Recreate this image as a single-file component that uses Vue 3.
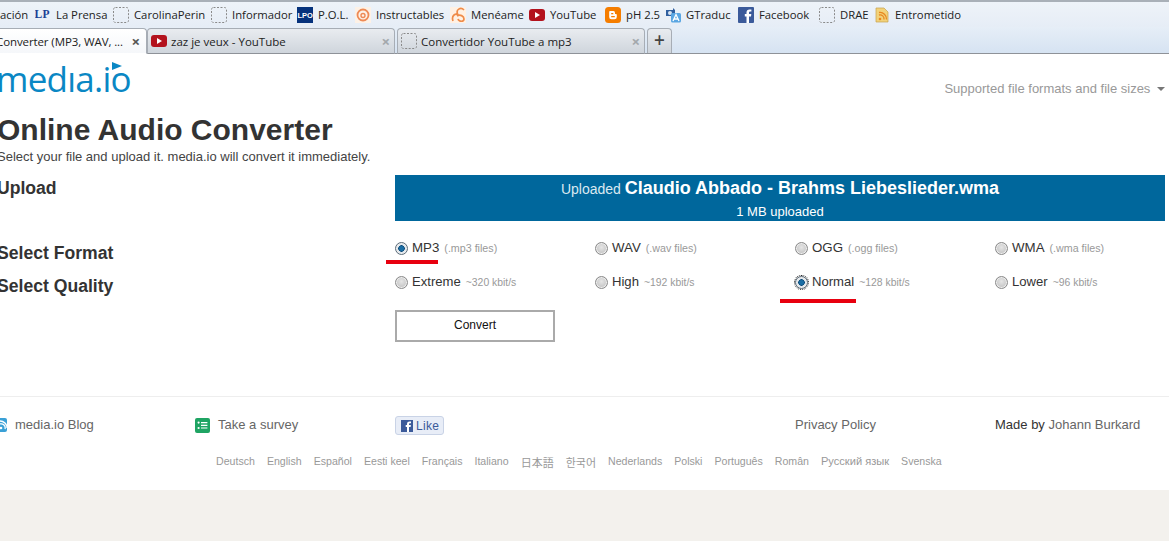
<script setup>
const marks = [
  { t: 'ación', i: null, w: 35 },
  { t: 'La Prensa', i: 'lp', w: 78 },
  { t: 'CarolinaPerin', i: 'blank', w: 98 },
  { t: 'Informador', i: 'blank', w: 86 },
  { t: 'P.O.L.', i: 'lpo', w: 58 },
  { t: 'Instructables', i: 'ins', w: 95 },
  { t: 'Menéame', i: 'men', w: 79 },
  { t: 'YouTube', i: 'yt', w: 76 },
  { t: 'pH 2.5', i: 'blog', w: 60 },
  { t: 'GTraduc', i: 'gt', w: 73 },
  { t: 'Facebook', i: 'fb', w: 81 },
  { t: 'DRAE', i: 'blank', w: 55 },
  { t: 'Entrometido', i: 'rss', w: 90 }
]
const tabs = [
  { t: 'Converter (MP3, WAV, ...', cls: 'tab active', icon: null },
  { t: 'zaz je veux - YouTube', cls: 'tab', icon: 'yt' },
  { t: 'Convertidor YouTube a mp3', cls: 'tab', icon: 'blank' }
]
const formats = [
  { n: 'MP3', d: '(.mp3 files)', on: true },
  { n: 'WAV', d: '(.wav files)' },
  { n: 'OGG', d: '(.ogg files)' },
  { n: 'WMA', d: '(.wma files)' }
]
const quality = [
  { n: 'Extreme', d: '~320 kbit/s' },
  { n: 'High', d: '~192 kbit/s' },
  { n: 'Normal', d: '~128 kbit/s', on: true, focus: true },
  { n: 'Lower', d: '~96 kbit/s' }
]
const langs = [
  { t: 'Deutsch' }, { t: 'English' }, { t: 'Español' }, { t: 'Eesti keel' }, { t: 'Français' }, { t: 'Italiano' },
  { t: '日本語', c: 'cjk' }, { t: '한국어', c: 'cjk' },
  { t: 'Nederlands' }, { t: 'Polski' }, { t: 'Português' }, { t: 'Român' }, { t: 'Русский язык', c: 'ru' }, { t: 'Svenska' }
]
</script>

<template>
  <div class="page">
    <div class="bookmarks">
      <div v-for="m in marks" :key="m.t" class="mark" :style="{ width: m.w + 'px' }">
        <svg v-if="m.i" class="fav" viewBox="0 0 16 16">
          <template v-if="m.i === 'blank'"><rect x=".5" y=".5" width="15" height="15" rx="2" fill="none" stroke="#8a8a8a" stroke-dasharray="2 1.5"/></template>
          <template v-else-if="m.i === 'lp'"><text x="-.5" y="10.5" font-size="11.5" font-weight="700" font-family="Liberation Serif" letter-spacing=".4" fill="#1c3f94">LP</text></template>
          <template v-else-if="m.i === 'lpo'"><rect width="16" height="16" fill="#06327c"/><text x=".5" y="11" font-size="7.5" font-weight="700" font-family="Liberation Sans" fill="#fff">LPO</text></template>
          <template v-else-if="m.i === 'ins'"><rect width="16" height="16" fill="#fdf1e6"/><circle cx="8" cy="8" r="5.5" fill="none" stroke="#ee8a55" stroke-width="1.8"/><circle cx="8" cy="8.5" r="2" fill="none" stroke="#ee8a55" stroke-width="1.4"/></template>
          <template v-else-if="m.i === 'men'"><rect width="16" height="16" fill="#fff1e4"/><path d="M3 14 C1 8 6 6 8 8 C5 2 11 0 14 3 M7 9 C10 7 14 9 14 12 C14 15 9 15 8 12" fill="none" stroke="#ef8c4a" stroke-width="1.7"/></template>
          <template v-else-if="m.i === 'yt'"><rect y="2" width="16" height="12" rx="3" fill="#b3121d"/><path d="M6 5 L11 8 L6 11 Z" fill="#fff"/></template>
          <template v-else-if="m.i === 'blog'"><rect width="16" height="16" rx="3.5" fill="#f57d00"/><path d="M5 4 H8.5 Q10 4 10 6 V7 H11 Q11.8 7 11.8 8 V10 Q11.8 12.3 9.5 12.3 H6.5 Q4.2 12.3 4.2 10 V5 Q4.2 4 5 4 Z" fill="#fff"/><path d="M6.2 6.6 H8.3 M6.2 9.7 H9.8" stroke="#f57d00" stroke-width="1.3"/></template>
          <template v-else-if="m.i === 'gt'"><path d="M1 3 H8 V1 L10 3 V9 H1 Z" fill="#2f5f9f"/><circle cx="5" cy="6" r="2" fill="#d7e4f2"/><rect x="6" y="6" width="10" height="9.5" rx="1.5" fill="#5aa6e2"/><path d="M8 14 L11 7.5 L14 14 M9.2 12 H12.8" fill="none" stroke="#fff" stroke-width="1.3"/></template>
          <template v-else-if="m.i === 'fb'"><rect width="16" height="16" rx="1" fill="#3b5a9a"/><path d="M11 16 V9.5 H13 L13.3 7 H11 V5.6 Q11 4.6 12.2 4.6 H13.4 V2.4 H11.6 Q8.5 2.4 8.5 5.4 V7 H6.8 V9.5 H8.5 V16 Z" fill="#fff"/></template>
          <template v-else-if="m.i === 'rss'"><path d="M2 1 H10 L14 5 V15 H2 Z" fill="#f2d27a" stroke="#c7a24a" stroke-width=".7"/><circle cx="6" cy="12" r="1.3" fill="#e8871e"/><path d="M5 8 A4 4 0 0 1 10 12.5 M5 5.5 A6.5 6.5 0 0 1 12.5 12.5" fill="none" stroke="#e8871e" stroke-width="1.3"/></template>
        </svg>
        <span>{{ m.t }}</span>
      </div>
    </div>

    <div class="tabstrip">
      <div v-for="t in tabs" :key="t.t" :class="t.cls">
        <svg v-if="t.icon === 'yt'" class="fav" viewBox="0 0 16 16"><rect y="2" width="16" height="12" rx="3" fill="#b3121d"/><path d="M6 5 L11 8 L6 11 Z" fill="#fff"/></svg>
        <svg v-if="t.icon === 'blank'" class="fav" viewBox="0 0 16 16"><rect x=".5" y=".5" width="15" height="15" rx="2" fill="none" stroke="#8a8a8a" stroke-dasharray="2 1.5"/></svg>
        <span class="tabtitle">{{ t.t }}</span>
        <span class="close">×</span>
      </div>
      <div class="newtab">+</div>
    </div>

    <div class="content">
      <header class="top">
        <div class="logo">medıa.io<i class="tri"></i></div>
        <div class="formats">Supported file formats and file sizes <i class="caret"></i></div>
      </header>

      <h1>Online Audio Converter</h1>
      <p class="sub">Select your file and upload it. media.io will convert it immediately.</p>

      <div class="row upload">
        <h2>Upload</h2>
        <div class="band">
          <div class="band1">Uploaded <b>Claudio Abbado - Brahms Liebeslieder.wma</b></div>
          <div class="band2">1 MB uploaded</div>
        </div>
      </div>

      <div class="row format">
        <h2>Select Format</h2>
        <div class="opts">
          <div v-for="o in formats" :key="o.n" class="opt">
            <i class="radio" :class="{ on: o.on }"></i><span class="name">{{ o.n }}</span><span class="desc">{{ o.d }}</span>
          </div>
        </div>
      </div>

      <div class="row quality">
        <h2>Select Quality</h2>
        <div class="opts">
          <div v-for="o in quality" :key="o.n" class="opt">
            <i class="radio" :class="{ on: o.on, focus: o.focus }"></i><span class="name">{{ o.n }}</span><span class="desc">{{ o.d }}</span>
          </div>
        </div>
      </div>

      <div class="row action">
        <span></span>
        <div><button class="convert">Convert</button></div>
      </div>

      <footer class="foot">
        <div class="links">
          <div class="l l1">
            <svg class="ficon" viewBox="0 0 14 14"><rect width="14" height="14" rx="2" fill="#3aa0d6"/><circle cx="8" cy="10" r="1.3" fill="#fff"/><path d="M7 6 A4 4 0 0 1 12 11 M7 3 A7 7 0 0 1 14 10" fill="none" stroke="#fff" stroke-width="1.3"/></svg>
            <span>media.io Blog</span>
          </div>
          <div class="l l2">
            <svg class="ficon sv" viewBox="0 0 15 15"><rect width="15" height="15" rx="2" fill="#1fa463"/><circle cx="3.6" cy="4.6" r="1.1" fill="#fff"/><circle cx="3.6" cy="10" r="1.1" fill="#fff"/><path d="M6 4.6 H12.4 M6 7.4 H12.4 M6 10 H12.4" stroke="#fff" stroke-width="1.2"/></svg>
            <span>Take a survey</span>
          </div>
          <div class="l l3">
            <span class="like"><svg viewBox="0 0 12 12" class="lf"><rect width="12" height="12" fill="#3b5a9a"/><path d="M8 12 V7 H9.6 L9.9 5 H8 V4 Q8 3.2 8.9 3.2 H10 V1.4 H8.5 Q6 1.4 6 3.8 V5 H4.7 V7 H6 V12 Z" fill="#fff"/></svg>Like</span>
          </div>
          <div class="l l4">Privacy Policy</div>
          <div class="l l5"><span class="dark">Made by</span> Johann Burkard</div>
        </div>
        <div class="langs"><span v-for="l in langs" :key="l.t" :class="l.c">{{ l.t }}</span></div>
      </footer>
    </div>

    <div class="bottom"></div>
    <i class="redline r1"></i>
    <i class="redline r2"></i>
  </div>
</template>

<style scoped>
.page { position: relative; width: 1169px; height: 541px; overflow: hidden; background: #f3f1ed; font-family: "Liberation Sans", Arial, sans-serif; }
.bookmarks { height: 27px; box-sizing: border-box; border-top: 2px solid #a9b0b8; display: flex; align-items: center; background: linear-gradient(#eef3f9, #e6edf6); font-family: "Open Sans", "Noto Sans", sans-serif; font-size: 11.3px; color: #222; white-space: nowrap; }
.mark { display: flex; align-items: center; gap: 5px; flex: none; }
.fav { width: 16px; height: 16px; flex: none; }
.tabstrip { height: 27px; box-sizing: border-box; border-bottom: 1px solid #8e9298; display: flex; align-items: flex-end; background: linear-gradient(#e6eef7, #d6e3f2); font-family: "Open Sans", "Noto Sans", sans-serif; font-size: 11.5px; color: #222; white-space: nowrap; }
.tab { width: 248px; height: 26px; box-sizing: border-box; margin-right: 2px; margin-bottom: -1px; padding: 0 4px 0 3px; flex: none; display: flex; align-items: center; gap: 4px; border: 1px solid #a7adb5; border-bottom-color: #8e9298; border-radius: 4px 4px 0 0; background: linear-gradient(#e9ecf0, #cfd5dc); }
.tab.active { width: 147px; margin-right: 0; padding: 0 6px 0 0; background: linear-gradient(#fff, #f5f7fa); border-left: 0; border-bottom-color: #fff; border-radius: 0 4px 0 0; }
.active .tabtitle { margin-left: -4px; overflow: visible; letter-spacing: -.1px; }
.tabtitle { flex: 1; overflow: hidden; }
.close { color: #a3a8ad; font-size: 15px; font-weight: 700; line-height: 1; }
.active .close { color: #555; }
.newtab { width: 25px; height: 25px; box-sizing: border-box; border: 1px solid #a7adb5; border-bottom: 0; border-radius: 4px 4px 0 0; text-align: center; font-size: 19px; line-height: 23px; color: #444; background: linear-gradient(#e9ecf0, #cfd5dc); font-weight: 600; }
.content { height: 436px; box-sizing: border-box; background: #fff; margin-left: -3px; color: #333; }
.top { display: flex; justify-content: space-between; height: 50px; }
.logo { position: relative; font-family: "Open Sans", sans-serif; font-size: 35px; font-weight: 500; line-height: 50px; color: #0a87c4; margin-left: -1px; letter-spacing: -.75px; }
.tri { position: absolute; left: 116px; top: 8px; border-left: 10px solid #0a87c4; border-top: 4px solid transparent; border-bottom: 4px solid transparent; }
.formats { margin: 27px 4px 0 0; font-size: 13px; line-height: 16px; color: #999; }
.caret { display: inline-block; vertical-align: 2px; margin-left: 3px; border-top: 4px solid #777; border-left: 4px solid transparent; border-right: 4px solid transparent; }
h1 { margin: 8px 0 0; font-size: 30px; line-height: 36px; font-weight: 700; color: #333; }
.sub { margin: 1px 0 0; font-size: 13px; line-height: 16px; color: #444; }
.row { display: grid; grid-template-columns: 398px 770px; }
h2 { margin: 0; font-size: 17.6px; line-height: 22px; font-weight: 700; color: #333; }
.upload { margin-top: 10px; height: 46px; }
.upload h2 { margin-top: 2px; }
.band { background: #00679c; color: #fff; text-align: center; height: 46px; }
.band1 { font-size: 14px; line-height: 26px; color: #dbe9f1; }
.band1 b { font-size: 18px; color: #fff; }
.band2 { font-size: 13px; line-height: 19px; }
.format { margin-top: 20px; height: 24px; }
.format h2 { margin-top: 1px; }
.format .opt { margin-top: -5px; }
.quality { margin-top: 9px; height: 24px; }
.quality h2 { margin-top: 1px; }
.quality .opt { margin-top: -4px; }
.quality .name { font-size: 13.1px; }
.quality .desc { font-size: 10.4px; }
.opts { display: grid; grid-template-columns: repeat(4, 200px); }
.opt { display: flex; align-items: center; height: 24px; }
.name { font-size: 13.3px; color: #333; margin: -2px 0 0 4px; }
.desc { font-size: 10.7px; color: #999; margin-left: 5px; }
.radio { width: 13px; height: 13px; box-sizing: border-box; flex: none; border-radius: 50%; border: 1px solid #8a8a8a; background: radial-gradient(circle at 50% 40%, #e5e5e5, #b8b8b8); box-shadow: inset 0 0 0 1px #eee; }
.radio.on { background: radial-gradient(circle, #1a6ea5 0 2px, #0c4a78 3px, #dfe6ec 3.5px); border-color: #5b6b78; }
.radio.focus { outline: 1px dotted #222; }
.action { margin-top: 12px; }
.convert { width: 160px; height: 32px; display: block; background: #fff; border: 2px solid #aaa; font: 12px "Liberation Sans", Arial, sans-serif; color: #111; padding: 0 0 2px; }
.foot { margin: 54px 0 0 0; border-top: 1px solid #eee; }
.links { display: grid; grid-template-columns: 198px 200px 400px 200px 170px; font-size: 13px; line-height: 20px; color: #666; margin-top: 18px; height: 20px; }
.l { display: flex; align-items: center; gap: 8px; white-space: nowrap; }
.l1 { margin-left: -4px; }
.l5 { display: block; }
.dark { color: #333; }
.ficon { width: 14px; height: 14px; flex: none; }
.sv { width: 15px; height: 15px; }
.like { display: inline-flex; align-items: center; gap: 3px; height: 19px; padding: 0 4px 0 5px; margin-top: 1px; box-sizing: border-box; border: 1px solid #c9d3e6; border-radius: 3px; background: #e8edf7; font-size: 12px; letter-spacing: .3px; color: #3b5a9a; }
.lf { width: 12px; height: 12px; }
.langs { margin-top: 20px; padding-left: 219px; display: flex; gap: 12px; font-size: 10.6px; color: #999; font-family: "Liberation Sans", "Noto Sans CJK JP", "Noto Sans CJK KR", sans-serif; white-space: nowrap; }
.langs .cjk { font-size: 11px; margin-top: -1px; }
.langs .ru { font-size: 11.1px; }
.redline { position: absolute; background: #e8000f; height: 4px; }
.r1 { left: 386px; top: 260px; width: 52px; }
.r2 { left: 780px; top: 299px; width: 76px; }
</style>
